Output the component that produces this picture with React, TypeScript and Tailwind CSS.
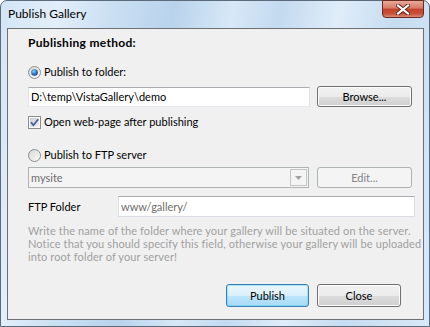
import React from "react";

function Radio({ checked }: { checked?: boolean }) {
  return (
    <svg width="13" height="13" viewBox="0 0 13 13" className="shrink-0">
      <defs>
        <linearGradient id={checked ? "rgA" : "rgB"} x1="0" y1="0" x2="1" y2="1">
          <stop offset="0" stopColor="#d6d6d6" />
          <stop offset="1" stopColor="#fbfbfb" />
        </linearGradient>
        <radialGradient id="rdot" cx="0.4" cy="0.35" r="0.7">
          <stop offset="0" stopColor="#9bdcff" />
          <stop offset="0.45" stopColor="#3a86cc" />
          <stop offset="1" stopColor="#12397a" />
        </radialGradient>
      </defs>
      <circle cx="6.5" cy="6.5" r="6" fill={`url(#${checked ? "rgA" : "rgB"})`} stroke="#8a8c8e" />
      {checked && <circle cx="6.5" cy="6.5" r="3.3" fill="url(#rdot)" />}
    </svg>
  );
}

function Checkbox() {
  return (
    <svg width="13" height="13" viewBox="0 0 13 13" className="shrink-0">
      <defs>
        <linearGradient id="cbg" x1="0" y1="0" x2="1" y2="1">
          <stop offset="0" stopColor="#c9ccd3" />
          <stop offset="1" stopColor="#f4f4f4" />
        </linearGradient>
      </defs>
      <rect x="0.5" y="0.5" width="12" height="12" fill="#fff" stroke="#8a8c8e" />
      <rect x="2" y="2" width="9" height="9" fill="url(#cbg)" />
      <path d="M3 6.3 L5.4 9.2 L10.2 3.2" fill="none" stroke="#3f5a96" strokeWidth="1.7" />
    </svg>
  );
}

function VButton({ label, w, h, variant = "normal" }: { label: string; w: string; h: string; variant?: "normal" | "default" | "disabled" }) {
  if (variant === "disabled") {
    return (
      <div className={`${w} ${h} rounded-[3px] border border-[#adb2b5] bg-[#f4f4f4] flex items-center justify-center text-[#838383]`}>
        {label}
      </div>
    );
  }
  if (variant === "default") {
    return (
      <div className={`${w} ${h} rounded-[3px] border border-[#3c7fb1] shadow-[inset_0_0_0_1px_#48d0ff66] bg-[linear-gradient(to_bottom,#eaf6fd_0%,#d9f0fc_50%,#bee6fd_51%,#a7d9f5_100%)] flex items-center justify-center text-black`}>
        {label}
      </div>
    );
  }
  return (
    <div className={`${w} ${h} rounded-[3px] border border-[#707070] shadow-[inset_0_0_0_1px_#fcfcfc] bg-[linear-gradient(to_bottom,#f2f2f2_0%,#ebebeb_50%,#dddddd_51%,#cfcfcf_100%)] flex items-center justify-center text-black`}>
      {label}
    </div>
  );
}

export default function App() {
  return (
    <div className="w-[430px] h-[327px] overflow-hidden font-['Lato',sans-serif] text-[11px] leading-[16px] text-black bg-white">
      <div className="w-[430px] h-[327px] rounded-t-[7px] border border-[#5b6b7c] bg-[linear-gradient(100deg,#d3e5f6_0%,#e2eef9_12%,#c9def2_24%,#b9d3ec_36%,#d7e8f7_48%,#c3daf0_58%,#e0edf9_70%,#c6dcf1_82%,#d9e9f7_100%)] flex flex-col">
        <div className="h-[27px] flex items-start relative">
          <div className="ml-[7px] mt-[5px] text-[12px] leading-[16px] text-black">Publish Gallery</div>
          <div className="absolute left-[381px] top-[-1px] w-[42px] h-[18px] rounded-b-[4px] border border-[#6b2a1f] bg-[linear-gradient(to_bottom,#e8a999_0%,#d67a66_45%,#c4412c_50%,#c8513c_80%,#dc8b78_100%)] flex items-center justify-center">
            <svg width="14" height="11" viewBox="0 0 14 11">
              <path d="M2 1.5 L12 9.5 M12 1.5 L2 9.5" stroke="#5a2218" strokeWidth="4" strokeLinecap="square" />
              <path d="M2 1.5 L12 9.5 M12 1.5 L2 9.5" stroke="#ffffff" strokeWidth="2.2" strokeLinecap="square" />
            </svg>
          </div>
        </div>
        <div className="ml-[6px] w-[417px] h-[292px] border border-[#6b7075] bg-[#f0f0f0] pl-[20px] flex flex-col">
          <div className="mt-[6px] font-bold text-[12px] tracking-[0.3px]">Publishing method:</div>
          <div className="mt-[13px] flex items-center gap-[2px] h-[16px]">
            <Radio checked />
            <span className="ml-[1px]">Publish to folder:</span>
          </div>
          <div className="mt-[6px] flex items-center h-[21px]">
            <div className="w-[282px] h-[20px] border border-[#abadb3] border-l-[#e2e3ea] border-r-[#dbdfe6] border-b-[#e3e9ef] bg-white flex items-center pl-[2px]">
              D:\temp\VistaGallery\demo
            </div>
            <div className="ml-[7px]">
              <VButton label="Browse..." w="w-[95px]" h="h-[21px]" />
            </div>
          </div>
          <div className="mt-[7px] flex items-center gap-[3px] h-[16px]">
            <Checkbox />
            <span>Open web-page after publishing</span>
          </div>
          <div className="mt-[17px] flex items-center gap-[2px] h-[16px]">
            <Radio />
            <span className="ml-[1px]">Publish to FTP server</span>
          </div>
          <div className="mt-[4px] flex items-center h-[21px]">
            <div className="w-[281px] h-[21px] border border-[#adb2b5] bg-[#f4f4f4] flex items-center pl-[2px] text-[#6d6d6d] relative">
              mysite
              <div className="absolute right-[1px] top-[1px] w-[17px] h-[17px] border border-[#c5c5c5] bg-[#f4f4f4] flex items-center justify-center">
                <svg width="7" height="4" viewBox="0 0 7 4">
                  <path d="M0 0 L7 0 L3.5 4 Z" fill="#a2a2a2" />
                </svg>
              </div>
            </div>
            <div className="ml-[8px]">
              <VButton label="Edit..." w="w-[95px]" h="h-[21px]" variant="disabled" />
            </div>
          </div>
          <div className="mt-[8px] flex items-center h-[21px]">
            <div className="w-[90px]">FTP Folder</div>
            <div className="w-[297px] h-[21px] border border-[#abadb3] border-l-[#dadde4] border-r-[#dadde4] border-b-[#dadde4] bg-white flex items-center pl-[2px] text-[#6d6d6d]">
              www/gallery/
            </div>
          </div>
          <div className="mt-[7px] text-[#a0a0a0] leading-[13px] tracking-[0.12px] w-[390px] whitespace-nowrap">
            Write the name of the folder where your gallery will be situated on the server.
            <br />
            Notice that you should specify this field, otherwise your gallery will be uploaded
            <br />
            into root folder of your server!
          </div>
          <div className="mt-[21px] flex items-center ml-[198px] gap-[8px]">
            <VButton label="Publish" w="w-[83px]" h="h-[23px]" variant="default" />
            <VButton label="Close" w="w-[84px]" h="h-[23px]" />
          </div>
        </div>
      </div>
    </div>
  );
}
